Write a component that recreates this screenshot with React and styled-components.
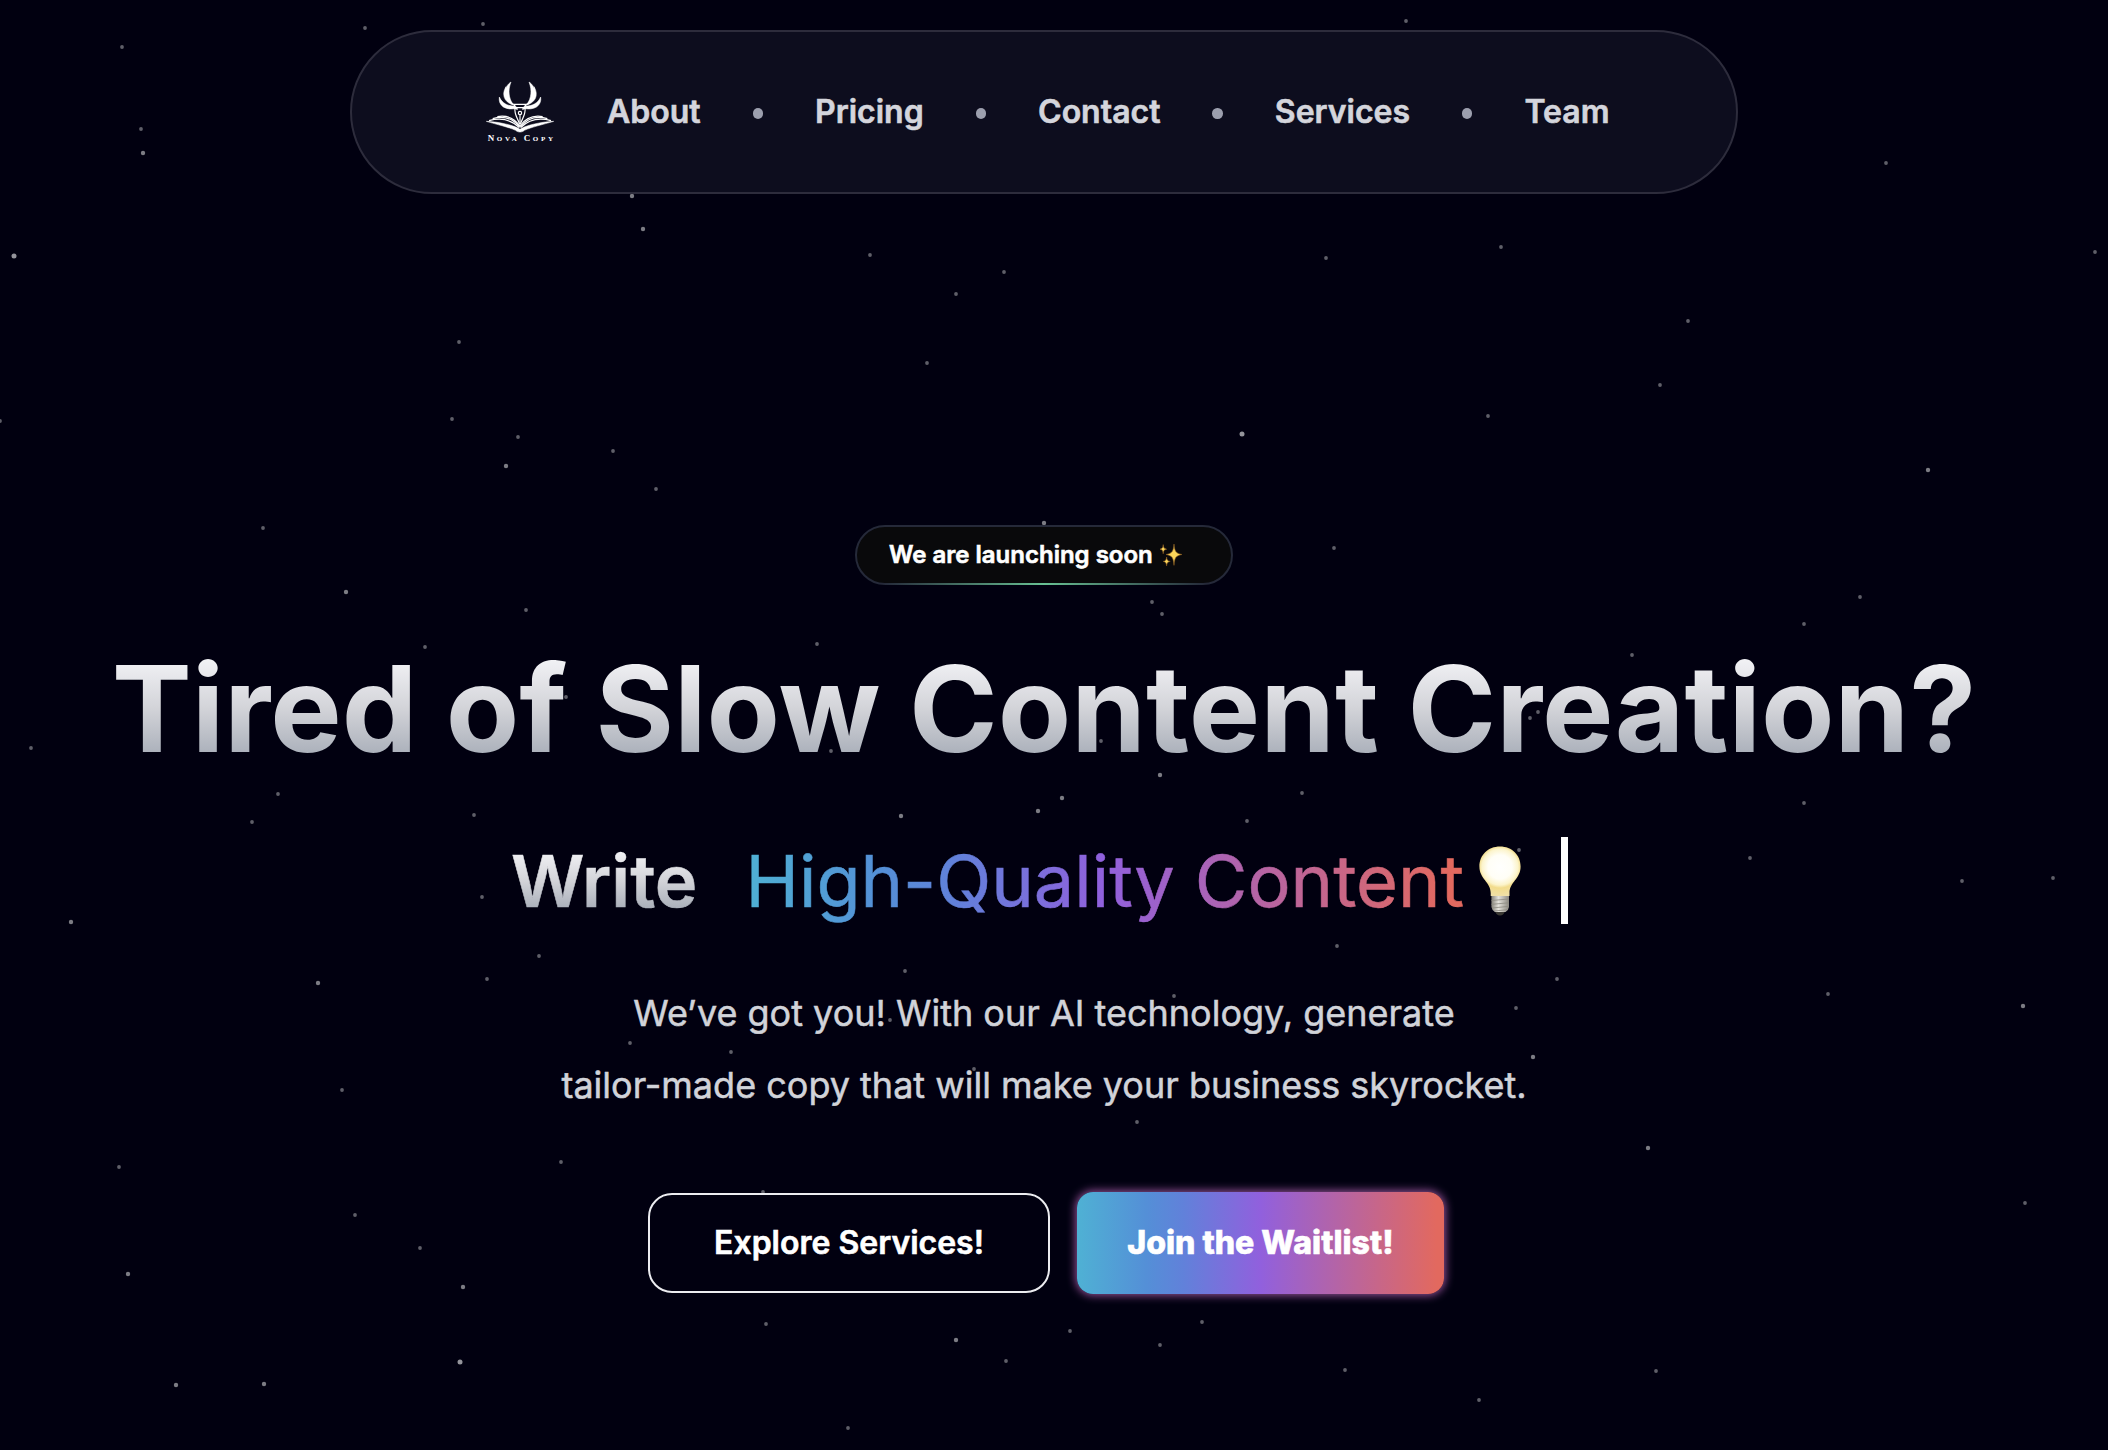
import React from "react";
import styled, { createGlobalStyle } from "styled-components";

const GlobalStyle = createGlobalStyle`
  *, *::before, *::after { box-sizing: border-box; }
  body {
    margin: 0;
    background: #010010;
    font-family: Inter, "Liberation Sans", sans-serif;
  }
`;

const brandGradient =
  "linear-gradient(90deg, #4fb1d4 0%, #548fd7 19%, #6181da 29%, #9160dd 50%, #e2695f 98%)";

const Page = styled.main`
  position: relative;
  width: 2108px;
  height: 1450px;
  overflow: hidden;
  padding: 30px 20px 0 0;
  display: flex;
  flex-direction: column;
  align-items: center;
  background: #010010;
`;

const StarField = styled.svg`
  position: absolute;
  inset: 0;
  width: 2108px;
  height: 1450px;
`;

const NavBar = styled.nav`
  position: relative;
  display: flex;
  align-items: center;
  width: 1388px;
  height: 164px;
  padding-left: 118px;
  border: 2px solid #2d2c3c;
  border-radius: 82px;
  background: #0d0d1e;
`;

const LogoArt = styled.svg`
  flex: none;
  width: 100px;
  height: 94px;
  margin-right: 37px;
`;

const NavList = styled.div`
  display: flex;
  align-items: center;
  gap: 52px;
`;

const NavLink = styled.a`
  color: #d4d5dc;
  font-size: 32px;
  font-weight: 600;
  line-height: 40px;
  -webkit-text-stroke: 0.6px #d4d5dc;
`;

const Dot = styled.span`
  width: 10.4px;
  height: 10.4px;
  margin-top: 3px;
  border-radius: 50%;
  background: #9c9fae;
`;

const Badge = styled.div`
  position: relative;
  display: flex;
  align-items: center;
  gap: 8px;
  width: 378px;
  height: 60px;
  margin-top: 331px;
  padding: 0 0 1px 32px;
  border: 2px solid #252939;
  border-radius: 30px;
  background: #09090b;

  &::after {
    content: "";
    position: absolute;
    left: 26px;
    right: 26px;
    bottom: -2px;
    height: 2px;
    background: linear-gradient(90deg, rgba(106, 196, 150, 0), #68c093, rgba(106, 196, 150, 0));
  }
`;

const BadgeText = styled.span`
  color: #fff;
  font-size: 24px;
  font-weight: 600;
  line-height: 32px;
  -webkit-text-stroke: 0.6px #fff;
`;

const SparkleArt = styled.svg`
  width: 22px;
  height: 22px;
  margin-left: -1px;
`;

const silver = `
  color: transparent;
  background: linear-gradient(180deg, #f8f8fb, #d2d3d8 50%, #9ea5b1);
  background-clip: text;
  -webkit-background-clip: text;
`;

const Headline = styled.h1`
  position: relative;
  margin: 64px 0 0;
  font-size: 120px;
  font-weight: 700;
  line-height: 120px;
  white-space: nowrap;
  ${silver}
`;

const TypeLine = styled.div`
  position: relative;
  display: flex;
  align-items: center;
  width: 1064px;
  height: 87px;
  margin-top: 68px;
`;

const Lead = styled.span`
  margin: 0 48px 0 -1px;
  font-size: 72px;
  font-weight: 600;
  line-height: 72px;
  -webkit-text-stroke: 0.6px transparent;
  ${silver}
`;

const Typed = styled.span`
  font-size: 72px;
  line-height: 90px;
  white-space: nowrap;
  color: transparent;
  -webkit-text-stroke: 0.6px transparent;
  background: ${brandGradient};
  background-clip: text;
  -webkit-background-clip: text;
`;

const BulbArt = styled.svg`
  width: 42px;
  height: 70px;
  margin: 0 39px 0 15px;
`;

const Caret = styled.span`
  width: 7px;
  height: 87px;
  margin-left: 1px;
  background: #fff;
`;

const Copy = styled.p`
  position: relative;
  margin: 53px 0 0;
  color: #d1d3d9;
  font-size: 36px;
  line-height: 72px;
  text-align: center;
  -webkit-text-stroke: 0.5px #d1d3d9;
`;

const Actions = styled.div`
  position: relative;
  display: flex;
  align-items: center;
  gap: 27px;
  margin: 71px 0 0 4px;
`;

const Button = styled.button`
  height: 100px;
  padding: 0 0 1px;
  color: #fff;
  font-family: inherit;
  font-size: 32px;
  -webkit-text-stroke: 0.6px #fff;
`;

const OutlineButton = styled(Button)`
  width: 402px;
  border: 2px solid #ececf0;
  border-radius: 24px;
  background: transparent;
  font-weight: 600;
`;

const GlowButton = styled(Button)`
  width: 367px;
  height: 102px;
  border: 0;
  border-radius: 16px;
  background: ${brandGradient};
  box-shadow: 0 0 10px 1px rgba(190, 105, 190, 0.85);
  font-weight: 800;
`;

const stars = [
  [122, 47], [365, 28], [483, 24], [1406, 21], [141, 129, 0], [143, 153, 1], [632, 196, 1], [643, 229, 1],
  [14, 256, 2], [870, 255], [956, 294], [1004, 272], [1326, 258], [1501, 247], [1886, 163], [2095, 252],
  [1688, 321], [459, 342], [927, 363], [1660, 385], [452, 419], [518, 437], [1488, 416], [1242, 434, 2],
  [613, 451], [506, 466, 1], [656, 489], [1928, 470, 1], [263, 528], [1044, 523, 1], [1334, 548], [346, 592, 1],
  [526, 610], [1152, 602], [1162, 614], [1860, 597], [1804, 624], [817, 644], [425, 647], [1632, 655],
  [566, 697], [31, 748], [1101, 741], [831, 751], [1160, 775, 1], [278, 794], [252, 822], [1062, 798, 1],
  [1038, 811, 1], [474, 815], [901, 816, 1], [1247, 821], [1302, 793], [1804, 803], [1530, 718], [1538, 712],
  [1750, 858], [1519, 850], [1962, 881], [2053, 878], [482, 897], [71, 922, 1], [539, 956], [487, 979],
  [1337, 946], [318, 983, 1], [905, 971], [1174, 996], [1828, 994], [2023, 1006, 1], [1516, 1008], [1557, 979],
  [890, 1020], [731, 1052], [630, 1043], [974, 1069], [1533, 1057, 1], [342, 1090], [1137, 1122], [1648, 1148, 1],
  [119, 1167], [561, 1162], [763, 1192], [355, 1215], [2025, 1203], [420, 1248], [128, 1274, 1], [463, 1287, 1],
  [766, 1324], [956, 1340, 1], [1006, 1361], [1070, 1331], [1202, 1322], [1160, 1345], [460, 1362, 2], [1345, 1370],
  [1656, 1371], [176, 1385, 1], [264, 1384, 1], [1479, 1400], [848, 1428], [0, 421],
];

const starLook = [
  { r: 1.9, fill: "#5f5f69" },
  { r: 2.2, fill: "#7c7c84" },
  { r: 2.5, fill: "#94949b" },
];

function Stars() {
  return (
    <StarField viewBox="0 0 2108 1450" aria-hidden="true">
      {stars.map(([x, y, k = 0]) => (
        <circle key={`${x}-${y}`} cx={x} cy={y} {...starLook[k]} />
      ))}
    </StarField>
  );
}

function AntlerAndPage() {
  return (
    <g>
      <g fill="#fff" stroke="#fff" strokeWidth="1.6" strokeLinejoin="round">
        <path d="M123 51C99 66 99 101 129 119C116 98 113 77 123 51Z" />
        <path d="M108 65C93 90 103 114 136 122C115 106 107 90 108 65Z" />
        <path d="M88 96C84 122 107 139 143 129L136 124C111 123 96 114 88 96Z" />
        <path d="M49 169L74 171C102 175 134 182 150 193V201C144 201 140 199 137 196C115 186 82 179 49 169Z" />
      </g>
      <g fill="none" stroke="#fff" strokeWidth="3.6">
        <path d="M57 167C90 158 124 164 148 188" />
        <path d="M68 161C98 152 128 160 149 186" />
        <path d="M82 155C110 150 132 158 150 183" />
        <path d="M150 118H132L136 128H150M135 130C132 146 142 158 149 178" />
        <path d="M130 127L143 133" />
      </g>
    </g>
  );
}

function Logo() {
  return (
    <LogoArt viewBox="0 0 300 282" role="img">
      <AntlerAndPage />
      <g transform="matrix(-1 0 0 1 300 0)">
        <AntlerAndPage />
      </g>
      <circle cx="150" cy="144" r="5" fill="none" stroke="#fff" strokeWidth="3.4" />
      <path d="M150 149V178" stroke="#fff" strokeWidth="3.4" />
      <text
        x="53"
        y="228"
        fill="#fff"
        fontFamily="'Liberation Serif', serif"
        fontWeight="700"
        fontSize="21"
        textLength="196"
      >
        <tspan fontSize="27">N</tspan>OVA <tspan fontSize="27">C</tspan>OPY
      </text>
    </LogoArt>
  );
}

function Sparkles() {
  return (
    <SparkleArt viewBox="0 0 22 22" aria-hidden="true">
      <g fill="#fbd65a" stroke="#8a5a22" strokeWidth="0.6">
        <path d="M14 0C14.6 7 15.6 9.4 22 10.5C15.6 11.6 14.6 14 14 21.4C13.4 14 12.4 11.6 6 10.5C12.4 9.4 13.4 7 14 0Z" />
        <path d="M3.2 0.6C3.5 3.8 4 4.6 6.6 5.2C4 5.8 3.5 6.6 3.2 9.8C2.9 6.6 2.4 5.8 0 5.2C2.4 4.6 2.9 3.8 3.2 0.6Z" />
        <path d="M6.6 13C6.9 16 7.5 16.8 10.2 17.4C7.5 18 6.9 18.8 6.6 22C6.3 18.8 5.7 18 3.2 17.4C5.7 16.8 6.3 16 6.6 13Z" />
      </g>
    </SparkleArt>
  );
}

function Bulb() {
  return (
    <BulbArt viewBox="0 0 42 70" aria-hidden="true">
      <defs>
        <radialGradient id="glass" gradientUnits="userSpaceOnUse" cx="21" cy="21" r="30">
          <stop offset="0" stopColor="#fffffe" />
          <stop offset="0.4" stopColor="#fffef6" />
          <stop offset="0.6" stopColor="#fcf4cb" />
          <stop offset="0.7" stopColor="#f2dc8c" />
          <stop offset="1" stopColor="#f0e0aa" />
        </radialGradient>
        <linearGradient id="metal">
          <stop offset="0" stopColor="#85827a" />
          <stop offset="0.4" stopColor="#e4e2dc" />
          <stop offset="1" stopColor="#8b8880" />
        </linearGradient>
      </defs>
      <path d="M15 64L27 64L24.5 68Q21 71 17.5 68Z" fill="#3b3934" />
      <path d="M12.4 49H30V61Q29.5 64.5 26.5 66H16Q13 64.5 12.4 61Z" fill="url(#metal)" />
      <path
        d="M12.5 54.5L30 53M12.5 58.3L30 56.8M13 62L29.5 60.4M15 65L28 63.8"
        stroke="#8d8a82"
        strokeWidth="0.8"
      />
      <path
        d="M21 0.4C9 0.4 0.4 9 0.4 20.5C0.4 33 11.7 36 11.7 47V50H30.5V47C30.5 36 41.6 33 41.6 20.5C41.6 9 33 0.4 21 0.4Z"
        fill="url(#glass)"
      />
    </BulbArt>
  );
}

const links = ["About", "Pricing", "Contact", "Services", "Team"];

export default function App() {
  return (
    <>
      <GlobalStyle />
      <Page>
        <Stars />
        <NavBar>
          <Logo />
          <NavList>
            {links.map((label, i) => (
              <React.Fragment key={label}>
                {i > 0 && <Dot />}
                <NavLink>{label}</NavLink>
              </React.Fragment>
            ))}
          </NavList>
        </NavBar>
        <Badge>
          <BadgeText>We are launching soon</BadgeText>
          <Sparkles />
        </Badge>
        <Headline>Tired of Slow Content Creation?</Headline>
        <TypeLine>
          <Lead>Write</Lead>
          <Typed>High-Quality Content</Typed>
          <Bulb />
          <Caret />
        </TypeLine>
        <Copy>
          We’ve got you! With our AI technology, generate
          <br />
          tailor-made copy that will make your business skyrocket.
        </Copy>
        <Actions>
          <OutlineButton>Explore Services!</OutlineButton>
          <GlowButton>Join the Waitlist!</GlowButton>
        </Actions>
      </Page>
    </>
  );
}
